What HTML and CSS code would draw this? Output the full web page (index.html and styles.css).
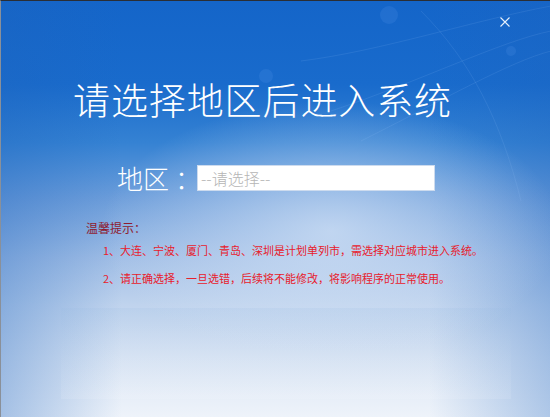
FILE: index.html
```html
<!DOCTYPE html>
<html lang="zh-CN">
<head>
<meta charset="utf-8">
<title>请选择地区后进入系统</title>
<link rel="stylesheet" href="styles.css">
</head>
<body>
<div class="window">
  <svg class="streaks" width="550" height="250" viewBox="0 0 550 250" aria-hidden="true">
    <path d="M300 60 C 380 50, 470 20, 550 5" />
    <path d="M330 110 C 420 80, 500 40, 550 30" />
    <path d="M360 140 C 440 100, 510 60, 550 50" />
    <path d="M420 10 C 470 60, 500 120, 520 200" />
    <circle cx="388" cy="14" r="9" class="bokeh"/>
    <circle cx="265" cy="75" r="7" class="bokeh"/>
    <circle cx="510" cy="50" r="5" class="bokeh"/>
  </svg>
  <button class="close" aria-label="关闭">
    <svg width="10" height="10" viewBox="0 0 10 10"><path d="M0.5 0.5 L9.5 9.5 M9.5 0.5 L0.5 9.5"/></svg>
  </button>
  <h1 class="title">请选择地区后进入系统</h1>
  <div class="region">
    <span class="region-label">地区<span class="colon">：</span></span>
    <div class="select">--请选择--</div>
  </div>
  <div class="tips">
    <div class="tips-head">温馨提示：</div>
    <ol class="tips-list">
      <li>1、大连、宁波、厦门、青岛、深圳是计划单列市，需选择对应城市进入系统。</li>
      <li>2、请正确选择，一旦选错，后续将不能修改，将影响程序的正常使用。</li>
    </ol>
  </div>
  <div class="band"></div>
</div>
</body>
</html>
```

FILE: styles.css
```css
html, body {
  margin: 0;
  padding: 0;
  background: #e9eff8;
}

.window {
  position: relative;
  width: 550px;
  height: 417px;
  box-sizing: border-box;
  border-top: 1px solid #2a2e35;
  border-left: 1px solid #8a9099;
  overflow: hidden;
  font-family: "Noto Sans CJK SC", "Noto Sans", sans-serif;
  background:
    radial-gradient(ellipse 230px 130px at 330px 230px, rgba(215, 229, 247, 0.7), rgba(215, 229, 247, 0) 100%),
    linear-gradient(to right, rgba(30, 100, 190, 0.35) 0%, rgba(30, 100, 190, 0) 22%, rgba(30, 100, 190, 0) 78%, rgba(30, 100, 190, 0.3) 100%),
    linear-gradient(to bottom, #1465c9 0%, #196bcc 20%, #3582d3 34%, #6f9fdb 48%, #a2bfe6 62%, #c2d5ee 74%, #dae5f4 86%, #eef3fa 100%);
}

.streaks {
  position: absolute;
  left: 0;
  top: 0;
  pointer-events: none;
}
.streaks path {
  fill: none;
  stroke: rgba(170, 210, 255, 0.14);
  stroke-width: 0.8;
}
.streaks .bokeh {
  fill: rgba(110, 170, 245, 0.14);
}

.close {
  position: absolute;
  top: 16px;
  right: 40px;
  width: 10px;
  height: 10px;
  padding: 0;
  border: 0;
  background: transparent;
  display: flex;
}
.close path {
  stroke: #e6f0fb;
  stroke-width: 1.1;
}

.title {
  margin: 78px 0 0;
  padding-left: 72px;
  font-size: 37px;
  line-height: 40px;
  font-weight: 300;
  color: #ffffff;
  letter-spacing: 0.9px;
  position: relative;
}

.region {
  display: flex;
  align-items: center;
  margin-top: 46px;
  padding-left: 116px;
  position: relative;
}

.region-label {
  width: 80px;
  font-size: 26px;
  line-height: 26px;
  font-weight: 300;
  color: #ffffff;
  white-space: nowrap;
}

.colon {
  margin-left: 6px;
}

.select {
  width: 238px;
  height: 26px;
  box-sizing: border-box;
  background: #ffffff;
  border: 1px solid #cddbee;
  padding-left: 3px;
  font-size: 16px;
  line-height: 24px;
  font-weight: 300;
  color: #b5b5b5;
}

.tips {
  margin-top: 27px;
  padding-left: 85px;
  position: relative;
}

.tips-head {
  font-size: 12px;
  line-height: 20px;
  color: #8e1c30;
}

.tips-list {
  list-style: none;
  margin: 2px 0 0;
  padding: 0 0 0 17px;
  display: flex;
  flex-direction: column;
  gap: 8px;
  font-size: 11px;
  line-height: 20px;
  color: #e8202c;
}

.band {
  position: absolute;
  left: 60px;
  top: 307px;
  width: 450px;
  height: 91px;
  background: linear-gradient(to bottom, rgba(150, 185, 225, 0.16), rgba(255, 255, 255, 0.1));
}
```
